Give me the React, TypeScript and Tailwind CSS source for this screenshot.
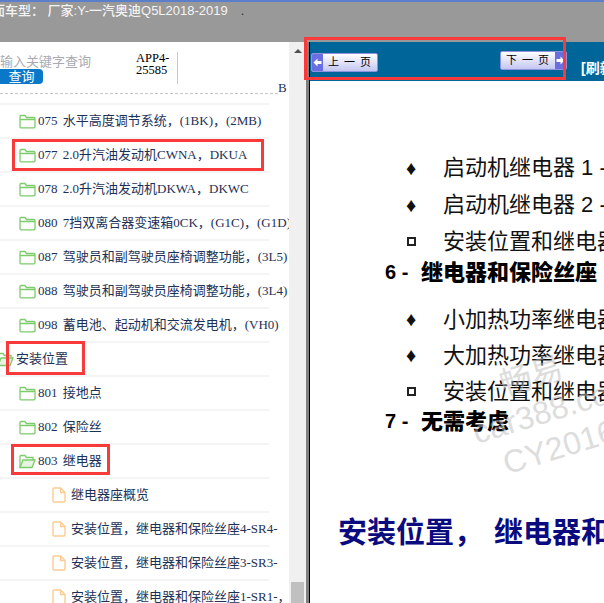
const treeFont = { fontFamily: '"Liberation Serif", "Noto Sans CJK SC", serif' };

function FolderIcon({ open }: { open?: boolean }) {
  return (
    <svg width="17" height="15" viewBox="0 0 17 15" fill="none" stroke="#7ccb6c" strokeWidth="1.3" className="shrink-0">
      {open ? (
        <>
          <path d="M1 13V2.5C1 1.9 1.4 1.5 2 1.5H6L7.5 3.5H14V6" />
          <path d="M1 13.5H13L16 6H4Z" fill="#e6f5e0" />
        </>
      ) : (
        <path d="M1 12.8V2.5C1 1.9 1.4 1.5 2 1.5H6L7.5 3.5H15C15.6 3.5 16 3.9 16 4.5V12.8C16 13.4 15.6 13.8 15 13.8H2C1.4 13.8 1 13.4 1 12.8ZM1 5.5H16" />
      )}
    </svg>
  );
}

function FileIcon() {
  return (
    <svg width="14" height="16" viewBox="0 0 14 16" fill="none" stroke="#fccb93" strokeWidth="1.4" className="shrink-0">
      <path d="M1 2C1 1.4 1.4 1 2 1H8.5L13 5.5V14C13 14.6 12.6 15 12 15H2C1.4 15 1 14.6 1 14Z" />
      <path d="M8.5 1V5.5H13" />
    </svg>
  );
}

type Row = { label: string; indent: string; icon: "folder" | "open" | "file" };

const rows: Row[] = [
  { label: "075 水平高度调节系统，(1BK)，(2MB)", indent: "pl-[19px]", icon: "folder" },
  { label: "077 2.0升汽油发动机CWNA，DKUA", indent: "pl-[19px]", icon: "folder" },
  { label: "078 2.0升汽油发动机DKWA，DKWC", indent: "pl-[19px]", icon: "folder" },
  { label: "080 7挡双离合器变速箱0CK，(G1C)，(G1D)", indent: "pl-[19px]", icon: "folder" },
  { label: "087 驾驶员和副驾驶员座椅调整功能，(3L5)", indent: "pl-[19px]", icon: "folder" },
  { label: "088 驾驶员和副驾驶员座椅调整功能，(3L4)", indent: "pl-[19px]", icon: "folder" },
  { label: "098 蓄电池、起动机和交流发电机，(VH0)", indent: "pl-[19px]", icon: "folder" },
  { label: "安装位置", indent: "-ml-[3px]", icon: "open" },
  { label: "801 接地点", indent: "pl-[19px]", icon: "folder" },
  { label: "802 保险丝", indent: "pl-[19px]", icon: "folder" },
  { label: "803 继电器", indent: "pl-[19px]", icon: "open" },
  { label: "继电器座概览", indent: "pl-[52px]", icon: "file" },
  { label: "安装位置，继电器和保险丝座4-SR4-", indent: "pl-[52px]", icon: "file" },
  { label: "安装位置，继电器和保险丝座3-SR3-", indent: "pl-[52px]", icon: "file" },
  { label: "安装位置，继电器和保险丝座1-SR1-，", indent: "pl-[52px]", icon: "file" },
];

function TreeRow({ row }: { row: Row }) {
  return (
    <div className="h-[34px] w-[269px] shrink-0 border-t-2 border-[#f4f4f4]">
      <div className={`flex h-full items-center gap-[2px] whitespace-nowrap text-[13px] text-[#1d3156] [word-spacing:2px] ${row.indent}`}>
        {row.icon === "file" ? <FileIcon /> : <FolderIcon open={row.icon === "open"} />}
        <span className={row.icon === "file" ? "ml-[3px]" : ""}>{row.label}</span>
      </div>
    </div>
  );
}

function PageButton({ label, next }: { label: string; next?: boolean }) {
  const arrow = (
    <span className="flex h-full w-[11px] shrink-0 items-center justify-center bg-[#6a6ee0]">
      <svg width="9" height="9" viewBox="0 0 9 9" fill="#fff" className={next ? "rotate-180" : ""}>
        <path d="M0.5 4.5L4.5 0.5V3H8.5V6H4.5V8.5Z" />
      </svg>
    </span>
  );
  return (
    <div className="flex h-[19px] w-[67px] items-center overflow-hidden rounded-[2px] border border-[#8f92dd] bg-gradient-to-b from-[#ffffff] to-[#c4c6f2] text-[11px] text-black">
      {!next && arrow}
      <span className="flex-1 pl-[4px] text-center tracking-[5px]">{label}</span>
      {next && arrow}
    </div>
  );
}

function Bullet({ text, square, tall }: { text: string; square?: boolean; tall?: boolean }) {
  return (
    <div className={`flex items-center whitespace-nowrap pl-[96px] text-[22px] text-[#111] ${tall ? "h-[37px]" : "h-[36px]"}`}>
      <span className="flex w-[37px] shrink-0 items-center text-[20px] leading-none">
        {square ? <span className="ml-[1px] h-[9px] w-[9px] border-2 border-[#222]" /> : "♦"}
      </span>
      {text}
    </div>
  );
}

function Numbered({ num, text }: { num: string; text: string }) {
  return (
    <div className="-mt-[2px] flex h-[28px] items-center whitespace-nowrap pl-[75px] text-[22px] font-black text-black">
      <span className="w-[36px] shrink-0 text-[20px] font-bold">{num}</span>
      {text}
    </div>
  );
}

export default function App() {
  return (
    <div
      className="relative flex h-[603px] w-[604px] flex-col overflow-hidden bg-white"
      style={{ fontFamily: '"Liberation Sans", "Noto Sans CJK SC", sans-serif' }}
    >
      <div className="h-[2px] shrink-0 bg-[#5b7fcb]" />
      <div className="h-[40px] shrink-0 overflow-hidden whitespace-nowrap bg-[#999999] text-[13px] leading-[18px] font-medium text-[#f4f4f4]">
        <span className="-ml-[8px] inline-block">面车型： 厂家:Y-一汽奥迪Q5L2018-2019</span>
        <span className="ml-[13px] text-[#333]">.</span>
      </div>

      <div className="flex min-h-0 flex-1">
        {/* left tree */}
        <div className="flex w-[289px] shrink-0 flex-col overflow-hidden" style={treeFont}>
          <div className="relative h-[52px] w-[278px] shrink-0 border-b border-dashed border-[#c8c8c8]">
            <div className="absolute left-0 top-[11px] text-[13px] leading-[18px] text-[#aaaab2]">输入关键字查询</div>
            <div className="absolute left-0 top-[27px] flex h-[15px] w-[43px] items-center justify-center rounded-r-[4px] bg-[#0a78c8] text-[13px] text-white">
              查询
            </div>
            <div className="absolute left-[136px] top-[10px] text-[12.5px] leading-[12px] text-black">
              APP4-
              <br />
              25585
            </div>
            <div className="absolute left-[177px] top-[10px] h-[32px] w-px bg-[#c8c8c8]" />
            <div className="absolute left-[278px] top-[36px] text-[13px] text-[#1d3156]">B</div>
          </div>
          <div className="h-[9px] shrink-0" />
          <div className="flex flex-col">
            {rows.map((row) => (
              <TreeRow key={row.label} row={row} />
            ))}
          </div>
        </div>

        {/* scrollbar */}
        <div className="flex w-[17px] shrink-0 flex-col items-center justify-between bg-[#f0f0f0]">
          <div className="mt-[7px] h-0 w-0 border-x-[4px] border-b-[4px] border-x-transparent border-b-[#505050]" />
          <div className="h-[21px] w-[13px] bg-[#c0c0c0]" />
        </div>
        <div className="w-[3px] shrink-0 bg-[#808080]" />
        <div className="w-[1px] shrink-0 bg-black" />

        {/* right pane */}
        <div className="relative min-w-0 flex-1 overflow-hidden">
          <div className="flex h-[39px] items-start bg-[#006699] pl-[1px]">
            <div className="mt-[11px]">
              <PageButton label="上一页" />
            </div>
            <div className="ml-[122px] mt-[9px]">
              <PageButton label="下一页" next />
            </div>
            <span className="ml-[14px] mt-[17px] whitespace-nowrap text-[14px] leading-[18px] font-bold text-white">[刷新</span>
          </div>
          <div className="pt-[68px]">
            <Bullet text="启动机继电器 1 -" tall />
            <Bullet text="启动机继电器 2 -" tall />
            <Bullet text="安装位置和继电器" square tall />
            <Numbered num="6 -" text="继电器和保险丝座" />
            <div className="h-[15px]" />
            <Bullet text="小加热功率继电器" />
            <Bullet text="大加热功率继电器" />
            <Bullet text="安装位置和继电器" square />
            <Numbered num="7 -" text="无需考虑" />
            <div className="whitespace-nowrap pl-[28px] pt-[80px] text-[29px] font-bold leading-[36px] text-[#0b0b80] [word-spacing:3px]">
              安装位置， 继电器和保险丝
            </div>
          </div>
          <div className="pointer-events-none absolute left-[160px] top-[310px] -rotate-[17deg] whitespace-nowrap text-[32px] leading-[38px] text-[#bdbdbd] opacity-50">
            <div className="pl-[40px]">畅易</div>
            <div>car388.com</div>
            <div className="pl-[20px]">CY2016</div>
          </div>
        </div>
      </div>

      {/* red annotation boxes */}
      <div className="absolute left-[304px] top-[37px] h-[43px] w-[262px] border-[3px] border-[#f83a3a]" />
      <div className="absolute left-[12px] top-[139px] h-[32px] w-[252px] border-[3px] border-[#f83a3a]" />
      <div className="absolute left-[6px] top-[341px] h-[34px] w-[79px] border-[3px] border-[#f83a3a]" />
      <div className="absolute left-[11px] top-[444px] h-[31px] w-[99px] border-[3px] border-[#f83a3a]" />
    </div>
  );
}
